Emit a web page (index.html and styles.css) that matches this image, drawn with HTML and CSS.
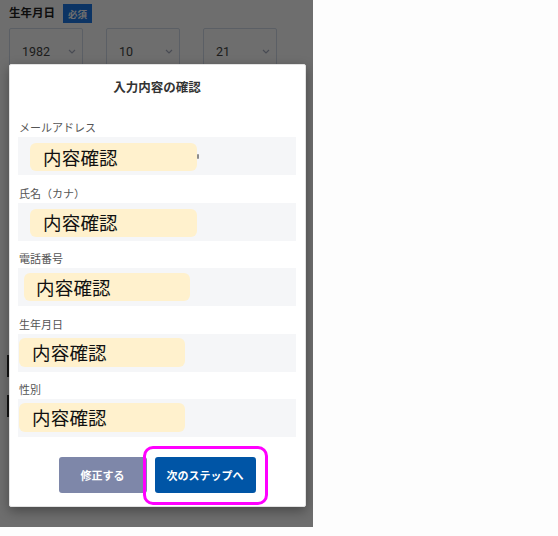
FILE: index.html
```html
<!DOCTYPE html>
<html lang="ja">
<head>
<meta charset="utf-8">
<title>入力内容の確認</title>
<link rel="stylesheet" href="styles.css">
</head>
<body>
<div class="screen">
  <form class="form">
    <div class="field-head">
      <span class="field-title">生年月日</span>
      <span class="badge">必須</span>
    </div>
    <div class="selects">
      <div class="select"><span class="select-value">1982</span><svg class="chevron" viewBox="0 0 8 5"><path d="M1 1l3 3 3-3"/></svg></div>
      <div class="select"><span class="select-value">10</span><svg class="chevron" viewBox="0 0 8 5"><path d="M1 1l3 3 3-3"/></svg></div>
      <div class="select"><span class="select-value">21</span><svg class="chevron" viewBox="0 0 8 5"><path d="M1 1l3 3 3-3"/></svg></div>
    </div>
    <div class="options">
      <div class="option"></div>
      <div class="option"></div>
    </div>
  </form>

  <div class="backdrop"></div>

  <section class="dialog">
    <h2 class="dialog-title">入力内容の確認</h2>
    <dl class="summary">
      <div class="summary-row">
        <dt class="summary-label">メールアドレス</dt>
        <dd class="summary-value"><span class="value-edge"></span><span class="mask mask--wide">内容確認</span></dd>
      </div>
      <div class="summary-row">
        <dt class="summary-label">氏名（カナ）</dt>
        <dd class="summary-value"><span class="mask mask--wide">内容確認</span></dd>
      </div>
      <div class="summary-row">
        <dt class="summary-label">電話番号</dt>
        <dd class="summary-value"><span class="mask mask--mid">内容確認</span></dd>
      </div>
      <div class="summary-row">
        <dt class="summary-label">生年月日</dt>
        <dd class="summary-value"><span class="mask mask--edge">内容確認</span></dd>
      </div>
      <div class="summary-row">
        <dt class="summary-label">性別</dt>
        <dd class="summary-value"><span class="mask mask--edge">内容確認</span></dd>
      </div>
    </dl>
    <div class="actions">
      <button class="btn btn--back" type="button">修正する</button>
      <button class="btn btn--next" type="button">次のステップへ</button>
    </div>
  </section>
</div>
</body>
</html>
```
FILE: styles.css
```css
* {
  box-sizing: border-box;
}

html,
body {
  margin: 0;
  padding: 0;
  background: #fdfdfd;
}

body {
  font-family: "Noto Sans CJK JP", "Noto Sans", sans-serif;
  color: #333;
}

.screen {
  position: relative;
  width: 313px;
  height: 527px;
  overflow: hidden;
  background: #fff;
}

/* form underneath the dialog */
.form {
  padding: 2px 0 0 9px;
}

.field-head {
  display: flex;
  align-items: center;
  gap: 8px;
  height: 20px;
}

.field-title {
  font-size: 11.5px;
  font-weight: 700;
  color: #222;
}

.badge {
  display: inline-flex;
  align-items: center;
  justify-content: center;
  width: 29px;
  height: 19px;
  margin-top: 3px;
  background: #1c7ae8;
  color: #fff;
  font-size: 9.5px;
  font-weight: 700;
}

.selects {
  display: flex;
  gap: 23px;
  margin-top: 6px;
}

.select {
  display: flex;
  align-items: center;
  justify-content: space-between;
  width: 74px;
  height: 46px;
  padding: 0 6px 0 12px;
  border: 1px solid #d2dcea;
  border-radius: 2px;
}

.select-value {
  font-family: Roboto, "Liberation Sans", sans-serif;
  font-size: 12.5px;
  color: #444;
}

.chevron {
  width: 8px;
  height: 5px;
  fill: none;
  stroke: #a8aec0;
  stroke-width: 1.2;
}

.options {
  display: flex;
  flex-direction: column;
  gap: 18px;
  margin: 281px 0 0 -2px;
}

.option {
  width: 120px;
  height: 22px;
  border-left: 2px solid #2a2a2a;
}

/* dimmed layer */
.backdrop {
  position: absolute;
  inset: 0;
  background: rgba(0, 0, 0, 0.57);
}

/* dialog */
.dialog {
  position: absolute;
  left: 9px;
  top: 64px;
  width: 297px;
  height: 443px;
  padding: 13px 9px 13px 8px;
  background: #fff;
  border: 1px solid #e2e2e2;
  border-radius: 2px;
  box-shadow: 0 4px 12px rgba(0, 0, 0, 0.35);
  display: flex;
  flex-direction: column;
}

.dialog-title {
  margin: 0;
  font-size: 12.5px;
  line-height: 18px;
  font-weight: 700;
  text-align: center;
  color: #333;
}

.summary {
  display: flex;
  flex-direction: column;
  gap: 9.5px;
  margin: 23px 0 0;
}

.summary-row {
  display: flex;
  flex-direction: column;
  gap: 2px;
}

.summary-label {
  font-size: 11px;
  line-height: 16px;
  color: #555;
  padding-left: 1px;
}

.summary-value {
  position: relative;
  margin: 0;
  height: 38px;
  background: #f5f6f8;
}

.value-edge {
  position: absolute;
  left: 179px;
  top: 17px;
  width: 2px;
  height: 5px;
  border-radius: 1px;
  background: #8c8c8c;
}

/* masked value */
.mask {
  position: absolute;
  display: flex;
  align-items: center;
  padding-left: 13px;
  background: #fff1cd;
  border-radius: 6px;
  color: #111;
  font-size: 18.5px;
  line-height: 1;
  letter-spacing: 0.2px;
}

.mask--wide {
  left: 12px;
  top: 6px;
  width: 167px;
  height: 28px;
}

.mask--mid {
  left: 6px;
  top: 5px;
  width: 166px;
  height: 28px;
  padding-left: 12px;
}

.mask--edge {
  left: 1px;
  top: 4px;
  width: 166px;
  height: 29px;
}

/* buttons */
.actions {
  display: flex;
  justify-content: center;
  gap: 8px;
  margin-top: auto;
}

.btn {
  height: 36px;
  border: 0;
  border-radius: 3px;
  color: #fff;
  font-family: "Noto Sans CJK JP", sans-serif;
  font-size: 11px;
  font-weight: 700;
  cursor: pointer;
}

.btn--back {
  width: 88px;
  background: #7e87a9;
}

.btn--next {
  position: relative;
  width: 101px;
  background: #0055a6;
}

.btn--next::after {
  content: "";
  position: absolute;
  left: -12px;
  right: -12px;
  top: -11px;
  bottom: -12px;
  border: 3px solid #ff00ff;
  border-radius: 10px;
}
```
